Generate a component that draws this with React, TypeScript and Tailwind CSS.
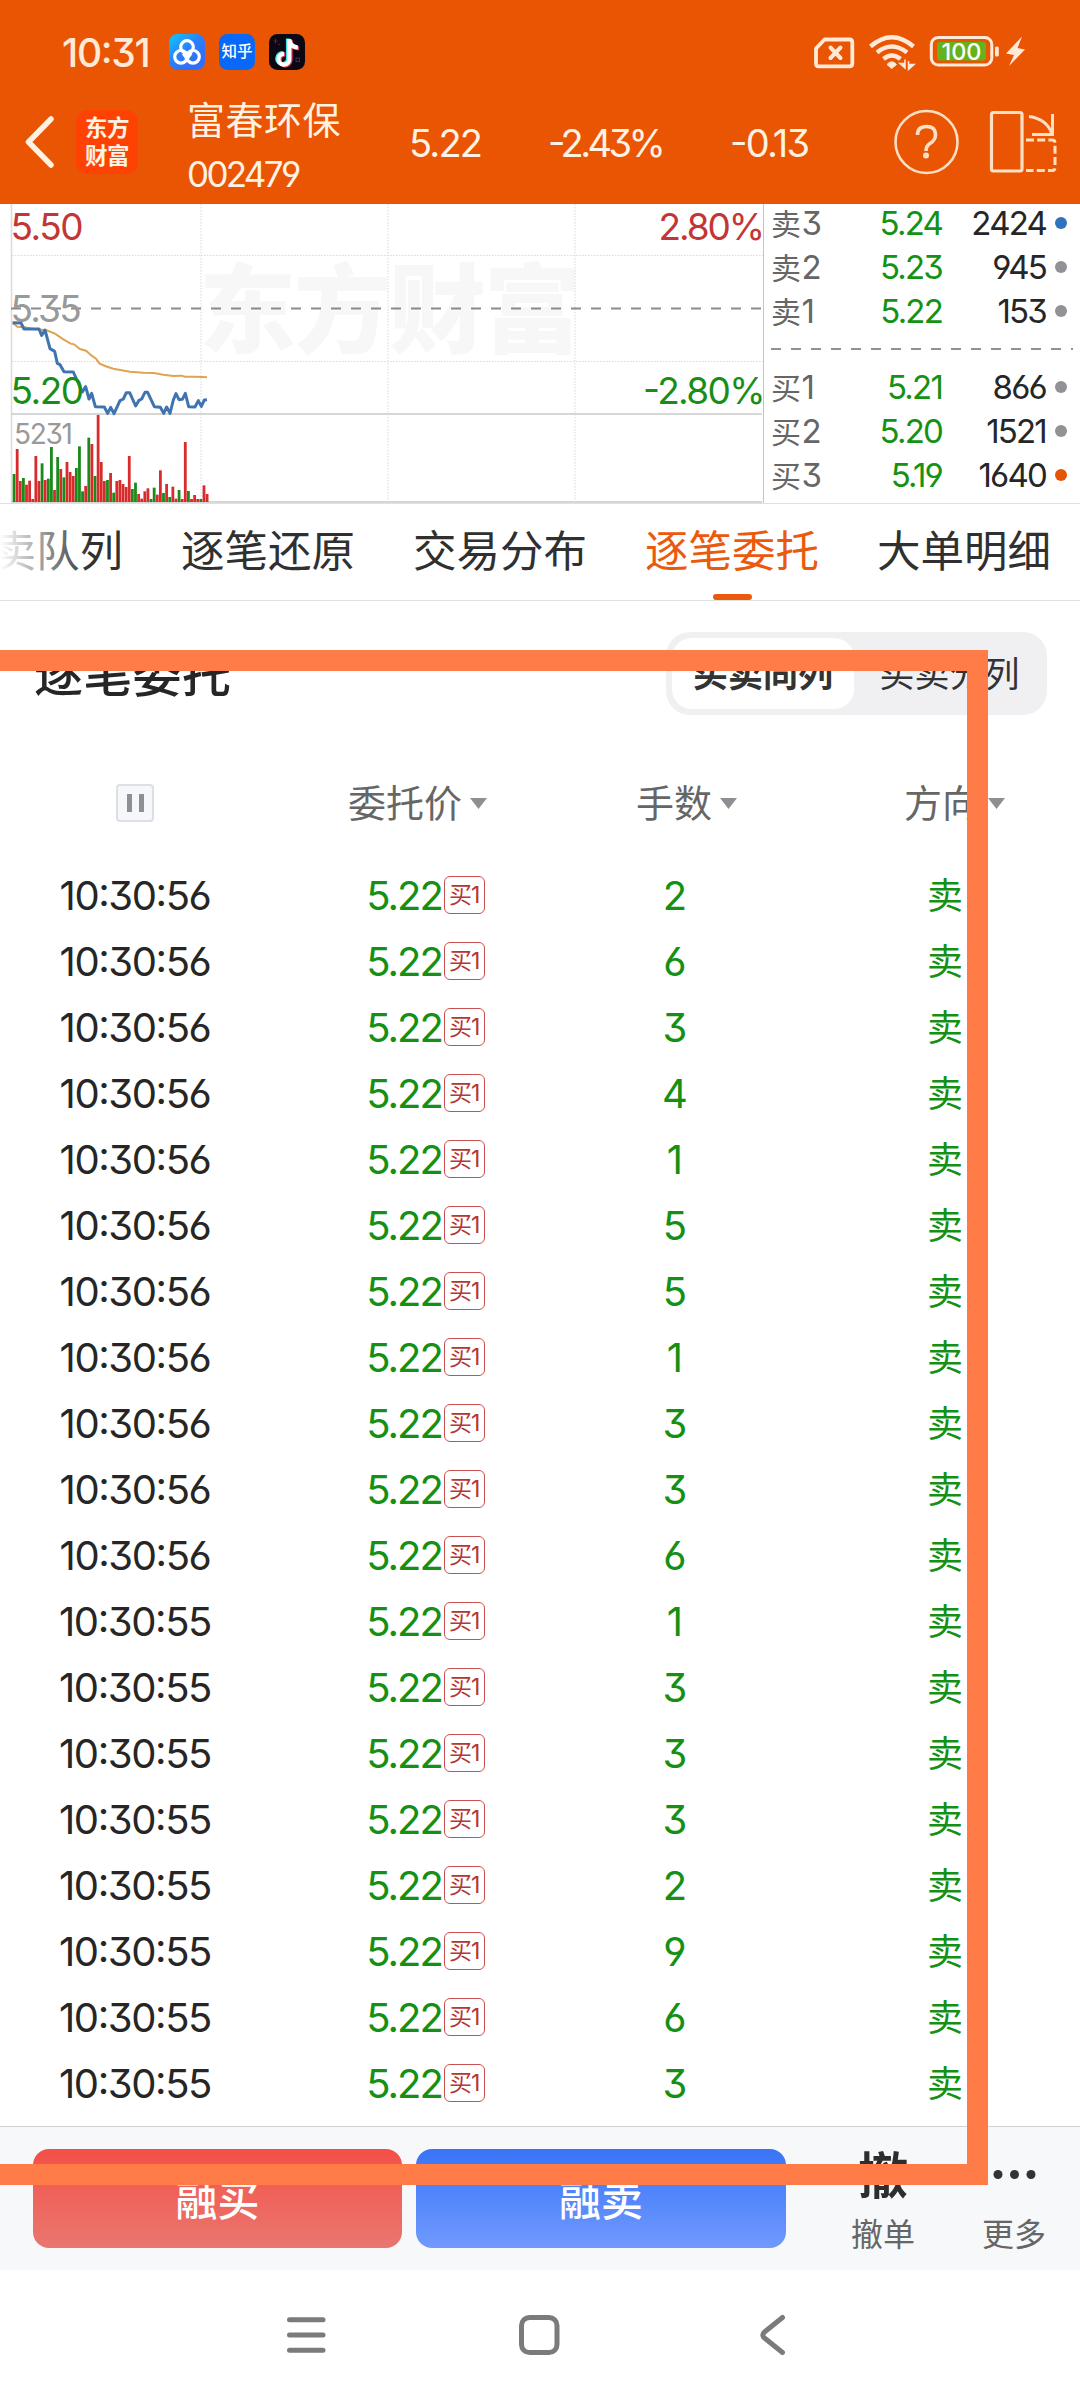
import React from "react";

const FONT =
  "font-['Inter','Noto_Sans_CJK_SC',sans-serif] [font-feature-settings:'cv03','cv04','cv09','calt']";

// [top of the bar, colour]; the base line is at 906 on the same scale
const VOLUMES: [number, "r" | "g"][] = [
  [822, "g"], [747, "r"], [843, "r"], [834, "g"], [854, "r"], [842, "r"], [897, "r"], [768, "r"],
  [843, "r"], [790, "g"], [840, "r"], [836, "g"], [741, "g"], [870, "r"], [771, "g"], [807, "r"],
  [832, "g"], [786, "r"], [816, "r"], [828, "r"], [804, "g"], [739, "g"], [874, "g"], [858, "r"],
  [713, "g"], [732, "r"], [828, "g"], [645, "r"], [786, "r"], [843, "r"], [840, "g"], [819, "r"],
  [878, "g"], [843, "r"], [840, "r"], [852, "r"], [861, "r"], [768, "r"], [867, "g"], [848, "g"],
  [882, "r"], [896, "r"], [874, "r"], [865, "r"], [897, "g"], [863, "g"], [884, "r"], [811, "r"],
  [879, "g"], [852, "r"], [891, "g"], [860, "r"], [896, "r"], [870, "g"], [897, "r"], [726, "r"],
  [873, "g"], [897, "r"], [885, "r"], [897, "r"], [897, "g"], [856, "r"], [882, "r"],
];

const PRICE_LINE =
  "38,368 63,369 72,387 117,387 125,406 135,390 150,446 164,454 172,490 180,494 192,515 220,516 247,576 257,560 267,597 275,580 286,620 313,621 323,640 332,622 342,641 360,602 370,597 379,578 389,578 407,618 417,601 425,597 435,577 443,577 463,620 481,622 491,640 500,621 510,640 520,600 528,581 537,599 547,598 556,580 566,620 585,621 595,602 604,619 613,600 621,599";

const AVG_LINE =
  "38,368 52,380 75,382 100,387 140,391 165,401 190,418 212,431 222,433 240,447 258,452 275,467 288,476 298,490 315,498 340,506 390,515 430,518 462,519 490,524 520,528 545,527 555,530 590,530 621,532";

function StatusBar() {
  return (
    <div className="flex h-[70px] items-end pl-[62px] text-[#ffead8]">
      <span className="w-[107px] text-[39px] font-medium leading-[35px] tracking-[-1.3px]">10:31</span>
      <div className="flex gap-[14px]">
        <svg width="36" height="36" viewBox="0 0 36 36">
          <defs>
            <linearGradient id="cloud" x1="0" y1="0" x2="0.7" y2="0.8">
              <stop offset="0" stopColor="#12c8fb" />
              <stop offset="0.6" stopColor="#2a80fa" />
              <stop offset="1" stopColor="#316ff8" />
            </linearGradient>
          </defs>
          <rect width="36" height="36" rx="8.5" fill="url(#cloud)" />
          <g fill="none" stroke="#fff" strokeWidth="3.2">
            <circle cx="18" cy="13" r="6.3" />
            <circle cx="12" cy="22.8" r="6.3" />
            <circle cx="24" cy="22.8" r="6.3" />
            <path d="M14 19.5 L18 25.5 L22.5 19" strokeWidth="2.6" />
          </g>
        </svg>
        <div className="flex h-9 w-9 items-center justify-center rounded-[8.5px] bg-[#0868f8] text-[15.5px] font-medium leading-none text-white">
          知乎
        </div>
        <svg width="36" height="36" viewBox="0 0 36 36">
          <rect width="36" height="36" rx="8.5" fill="#0b0713" />
          <g fill="none" strokeWidth="4.2">
            <path d="M19 4.5 V25 a5.4 5.4 0 1 1 -5.2 -5.8 M19 5 c0.6 5 3.6 7.6 8.5 8" stroke="#3de4e2" />
            <path d="M21.5 6 V26.3 a5.4 5.4 0 1 1 -5.2 -5.8 M21.5 6.5 c0.6 5 3.6 7.6 8.5 8" stroke="#f33c5e" />
            <path d="M20.3 5 V25.6 a5.4 5.4 0 1 1 -5.2 -5.8 M20.3 5.5 c0.6 5 3.6 7.6 8.5 8" stroke="#fff" />
          </g>
          <path d="M4.500 7 h4 M6.500 4.500 v5 M9 10 l2 1" stroke="#7c2338" strokeWidth="0.8" />
          <rect x="27" y="24" width="3.500" height="3.500" fill="none" stroke="#392b78" />
        </svg>
      </div>
      <div className="ml-[507px] flex h-9 items-center">
        <svg width="215" height="38" viewBox="812 34 215 38">
          <path
            d="M824.500 40.500 H849.500 Q852.300 40.500 852.300 43.300 V64.500 Q852.300 67.300 849.500 67.300 H818.700 Q816 67.300 816 64.500 V49.500 Z"
            fill="none"
            stroke="currentColor"
            strokeWidth="3.800"
            strokeLinejoin="round"
          />
          <path d="M830.500 48.500 L840.500 59 M840.500 48.500 L830.500 59" stroke="currentColor" strokeWidth="4" strokeLinecap="round" />
          <g fill="none" stroke="currentColor" strokeWidth="4.400">
            <path d="M870.500 47.500 Q891.700 29 913.500 47.500" />
            <path d="M877 53.500 Q891.700 41.500 907 53.500" />
            <path d="M883.500 60 Q891.700 53 900.500 60" />
          </g>
          <path d="M887 65.500 Q891.700 60 896.500 65.500 L891.700 69.500 Z" fill="currentColor" stroke="currentColor" />
          <path d="M900 64.500 H905 V60.500 V69 Z M908.500 70.500 V62 V65.500 H914 Z" fill="currentColor" stroke="currentColor" strokeWidth="1.500" />
          <rect x="931.300" y="38.500" width="60.500" height="27.500" rx="7" fill="none" stroke="currentColor" strokeWidth="3" />
          <rect x="937" y="43" width="49" height="18.500" rx="3" fill="#65b21c" />
          <text x="961.500" y="60.800" textAnchor="middle" fill="#fff" fontSize="23.500" fontWeight="500" textLength="40">
            100
          </text>
          <rect x="995" y="47.500" width="3.800" height="10" rx="1.500" fill="currentColor" />
          <path d="M1022 37.500 L1006 54.500 L1014 56 L1009 67 L1025 50.500 L1017.500 49 Z" fill="currentColor" />
        </svg>
      </div>
    </div>
  );
}

function TitleBar() {
  return (
    <div className="flex h-[134px] pb-[2px] pl-[24px] text-[#fff2e2]">
      <svg className="mt-[45px]" width="32" height="54" viewBox="0 0 32 54">
        <path d="M27 4 L4.500 27 L27 50" fill="none" stroke="currentColor" strokeWidth="5.500" strokeLinecap="round" strokeLinejoin="round" />
      </svg>
      <div className="ml-[20px] mt-[40px] flex h-[64px] w-[62px] flex-col items-center justify-center rounded-[12px] bg-[#fe4203] text-[22.5px] font-bold leading-[28px] tracking-[-0.5px]">
        <span>东方</span>
        <span>财富</span>
      </div>
      <div className="ml-[49px] w-[222px]">
        <div className="mt-[30px] text-[38px] leading-[40px] tracking-[0.5px]">富春环保</div>
        <div className="mt-[14px] text-[35px] leading-[40px] tracking-[-2.7px]">002479</div>
      </div>
      <div className="flex h-[146px] items-center text-[38px] leading-none tracking-[-1.8px]">
        <span className="w-[139px]">5.22</span>
        <span className="w-[182px] tracking-[-3.6px]">-2.43%</span>
        <span className="w-[164px]">-0.13</span>
      </div>
      <svg className="mt-[38px]" width="164" height="70" viewBox="894 108 164 70">
        <g fill="none" stroke="#ffdfc4" strokeWidth="2.600">
          <circle cx="926.500" cy="142" r="31" />
          <path d="M917.500 135 Q917.500 126.500 926.500 126.500 Q935.500 126.500 935.500 134.500 Q935.500 140 930 143.500 Q926 146 926 151" strokeWidth="3.600" />
          <rect x="991.500" y="112.500" width="30.500" height="58.500" rx="2" strokeWidth="3.200" />
          <path d="M1029 116.500 Q1047 119 1052 134 M1052.500 114 V134.500 H1032" strokeWidth="3" />
          <path d="M1026 140 H1052 Q1055 140 1055 143 V167.500 Q1055 170.500 1052 170.500 H1026" strokeWidth="3" strokeDasharray="8 3.200" />
        </g>
        <circle cx="926" cy="155.500" r="3" fill="#ffdfc4" />
      </svg>
    </div>
  );
}

function PriceChart() {
  return (
    <svg className="shrink-0" width="764" height="299" viewBox="0 0 764 299">
      <text x="199" y="141" fontSize="97" fontWeight="900" fill="#f7f7f7" textLength="382">
        东方财富
      </text>
      <g stroke="#d8d8d8" strokeDasharray="1.500 1.500">
        <path d="M201 0 V298 M388 0 V298 M575 0 V298 M12 51.500 H763 M12 157.500 H763" />
      </g>
      <path d="M11.500 0 V298" stroke="#dcdcdc" strokeWidth="1.600" />
      <path d="M763.500 0 V299" stroke="#c4c4c4" />
      <path d="M11 210 H762 M11 298 H762" stroke="#d6d6d6" strokeWidth="2" />
      <path d="M11 104.500 H762" stroke="#8a8a8a" strokeWidth="1.800" strokeDasharray="10 10" />
      <g transform="translate(0 -4) scale(0.33333)">
        {VOLUMES.map(([top, tone], i) => (
          <rect key={i} x={38 + i * 9.34} y={top} width="8.400" height={906 - top} fill={tone === "r" ? "#d92b2b" : "#1a8a1a"} />
        ))}
        <polyline points={AVG_LINE} fill="none" stroke="#dfa352" strokeWidth="6" />
      </g>
      <g fontSize="37" letterSpacing="-1.500">
        <text x="10.500" y="36" fill="#c33636">5.50</text>
        <text x="10.500" y="118" fill="#999" letterSpacing="-1.800">5.35</text>
      </g>
      <g transform="translate(0 -4) scale(0.33333)">
        <polyline points={PRICE_LINE} fill="none" stroke="#3f74b0" strokeWidth="9" strokeLinejoin="round" />
      </g>
      <g fontSize="37" letterSpacing="-1.500">
        <text x="10.500" y="200" fill="#178f17">5.20</text>
        <text x="658.500" y="36" fill="#c33636" textLength="105">2.80%</text>
        <text x="643" y="200" fill="#178f17" textLength="121">-2.80%</text>
      </g>
      <text x="14" y="240" fontSize="28" fill="#999" letterSpacing="-1.300">5231</text>
    </svg>
  );
}

function BookRow({ label, price, volume, dot }: { label: string; price: string; volume: string; dot: string }) {
  return (
    <div className="flex h-11 items-center text-[33px] leading-none tracking-[-1.8px]">
      <span className="w-[69px] text-[#666]">
        <span className="text-[30px] tracking-[0.5px]">{label[0]}</span>
        {label[1]}
      </span>
      <span className="w-[102px] text-right text-[#149214]">{price}</span>
      <span className="w-[104px] text-right text-[#262626]">{volume}</span>
      <span className={`ml-[9px] h-3 w-3 rounded-full ${dot}`} />
    </div>
  );
}

function OrderBook() {
  const gray = "bg-[#929196]";
  return (
    <div className="flex-1 pl-[7px]">
      <div className="-mt-[3px]">
        <BookRow label="卖3" price="5.24" volume="2424" dot="bg-[#2f72bd]" />
        <BookRow label="卖2" price="5.23" volume="945" dot={gray} />
        <BookRow label="卖1" price="5.22" volume="153" dot={gray} />
      </div>
      <svg className="mb-[15px] mt-[15px]" width="304" height="2">
        <path d="M0 1 H302" stroke="#909090" strokeWidth="1.800" strokeDasharray="10 10" />
      </svg>
      <BookRow label="买1" price="5.21" volume="866" dot={gray} />
      <BookRow label="买2" price="5.20" volume="1521" dot={gray} />
      <BookRow label="买3" price="5.19" volume="1640" dot="bg-[#e45505]" />
    </div>
  );
}

const TABS = ["买卖队列", "逐笔还原", "交易分布", "逐笔委托", "大单明细"];

function Tabs() {
  return (
    <div className="relative h-[98px] overflow-hidden border-b border-t border-[#dfe0e2]">
      <div className="-ml-[52px] flex h-full gap-[56px]">
        {TABS.map((t) => (
          <div
            key={t}
            className={`relative h-full w-[176px] shrink-0 pt-[23px] text-center text-[43.5px] leading-[48px] ${
              t === "逐笔委托" ? "text-[#eb5a0c]" : "text-[#303030]"
            }`}
          >
            {t}
            {t === "逐笔委托" && <span className="absolute bottom-0 left-[69px] h-[6px] w-[39px] rounded-[3px] bg-[#eb5a0c]" />}
          </div>
        ))}
      </div>
      <div className="absolute left-0 top-0 h-full w-[90px] bg-gradient-to-r from-white to-transparent" />
    </div>
  );
}

function Arrow() {
  return (
    <svg className="absolute left-full top-[14px] ml-[8px]" width="17" height="11">
      <path d="M0 0 H17 L8.500 11 Z" fill="#8e8e93" />
    </svg>
  );
}

const ROWS: [string, number][] = [
  ["10:30:56", 2], ["10:30:56", 6], ["10:30:56", 3], ["10:30:56", 4], ["10:30:56", 1],
  ["10:30:56", 5], ["10:30:56", 5], ["10:30:56", 1], ["10:30:56", 3], ["10:30:56", 3],
  ["10:30:56", 6], ["10:30:55", 1], ["10:30:55", 3], ["10:30:55", 3], ["10:30:55", 3],
  ["10:30:55", 2], ["10:30:55", 9], ["10:30:55", 6], ["10:30:55", 3],
];

function OrderTable() {
  return (
    <div className="h-[1525px] pt-[31px]">
      <div className="flex h-[82px] items-center justify-between pl-[34px] pr-[33px]">
        <h2 className="pt-[3px] text-[49px] font-medium leading-none tracking-[0.3px] text-[#262626]">逐笔委托</h2>
        <div className="flex h-[83px] w-[381px] rounded-[24px] bg-[#f0f0f3] p-[6px] text-[35px] leading-none text-[#333]">
          <div className="flex w-[182px] items-center justify-center rounded-[20px] bg-white pt-[2px] font-bold">买卖同列</div>
          <div className="flex flex-1 items-center justify-center pl-[4px] pt-[2px]">买卖分列</div>
        </div>
      </div>
      <div className="mt-[70px] grid h-[38px] grid-cols-4 place-items-center text-[38px] leading-none text-[#666]">
        <div className="flex h-[38px] w-[38px] items-center justify-center gap-[7px] rounded-[4px] border-2 border-[#dcdfe3] bg-[#f5f7fa]">
          <span className="h-[18px] w-[5px] bg-[#8e8e93]" />
          <span className="h-[18px] w-[5px] bg-[#8e8e93]" />
        </div>
        <span className="relative">委托价<Arrow /></span>
        <span className="relative right-[1px]">手数<Arrow /></span>
        <span className="relative right-[3px]">方向<Arrow /></span>
      </div>
      <div className="mt-[41px]">
        {ROWS.map(([time, lots], i) => (
          <div key={i} className="grid h-[66px] grid-cols-4 place-items-center text-[40px] leading-none text-[#149014]">
            <span className="tracking-[-1.4px] text-[#262626]">{time}</span>
            <span className="relative right-[1px] tracking-[-2px]">
              5.22
              <span className="absolute left-full top-0 ml-[2px] flex h-[38px] w-[41px] items-center justify-center rounded-[6px] border-[1.5px] border-[#c9504e] text-[23px] tracking-[-1px] text-[#b53632]">
                买1
              </span>
            </span>
            <span>{lots}</span>
            <span className="text-[36px]">卖</span>
          </div>
        ))}
      </div>
    </div>
  );
}

function ActionBar() {
  return (
    <div className="flex h-[144px] border-t border-[#cfd2d5] bg-[#f7f8fa] pl-[33px] pt-[22px]">
      <div className="flex h-[99px] w-[369px] items-center justify-center rounded-[16px] bg-gradient-to-b from-[#f34f47] to-[#ea7670] pt-[5px] text-[42px] font-medium leading-none text-white">
        融买
      </div>
      <div className="ml-[14px] flex h-[99px] w-[370px] items-center justify-center rounded-[16px] bg-gradient-to-b from-[#3874f6] to-[#7099ff] pt-[5px] text-[42px] font-medium leading-none text-white">
        融卖
      </div>
      <div className="ml-[47px] flex w-[100px] flex-col items-center text-[#2e2e2e]">
        <span className="pt-[2px] text-[50px] font-bold leading-[50px]">撤</span>
        <span className="mt-[16px] text-[32px] leading-[36px] text-[#666]">撤单</span>
      </div>
      <div className="ml-[30px] flex w-[102px] flex-col items-center">
        <svg width="44" height="50">
          <circle cx="6" cy="25.500" r="4.500" fill="#333" />
          <circle cx="22.500" cy="25.500" r="4.500" fill="#333" />
          <circle cx="39" cy="25.500" r="4.500" fill="#333" />
        </svg>
        <span className="mt-[18px] text-[32px] leading-[36px] text-[#666]">更多</span>
      </div>
    </div>
  );
}

function NavBar() {
  return (
    <div className="flex h-[129px] pl-[286px] pt-[44px]">
      <svg width="500" height="42" viewBox="286 2314 500 42" fill="none" stroke="#7b7b7b" strokeWidth="5" strokeLinecap="round">
        <path d="M289.500 2319.700 H323 M289.500 2335 H323 M289.500 2350.300 H323" />
        <rect x="521.500" y="2317.500" width="35.500" height="35" rx="8" />
        <path d="M782.500 2317.500 L764.500 2332 Q761 2335 764.500 2338 L782.500 2352.500" strokeLinejoin="round" />
      </svg>
    </div>
  );
}

export default function App() {
  return (
    <div className={`relative h-[2400px] w-[1080px] overflow-hidden bg-white ${FONT}`}>
      <header className="bg-[#e95503]">
        <StatusBar />
        <TitleBar />
      </header>
      <div className="flex h-[299px]">
        <PriceChart />
        <OrderBook />
      </div>
      <Tabs />
      <OrderTable />
      <ActionBar />
      <NavBar />
      <div className="absolute left-0 top-[650px] h-[1535px] w-[988px] border-y-[21px] border-r-[21px] border-[#ff7b47]" />
    </div>
  );
}
